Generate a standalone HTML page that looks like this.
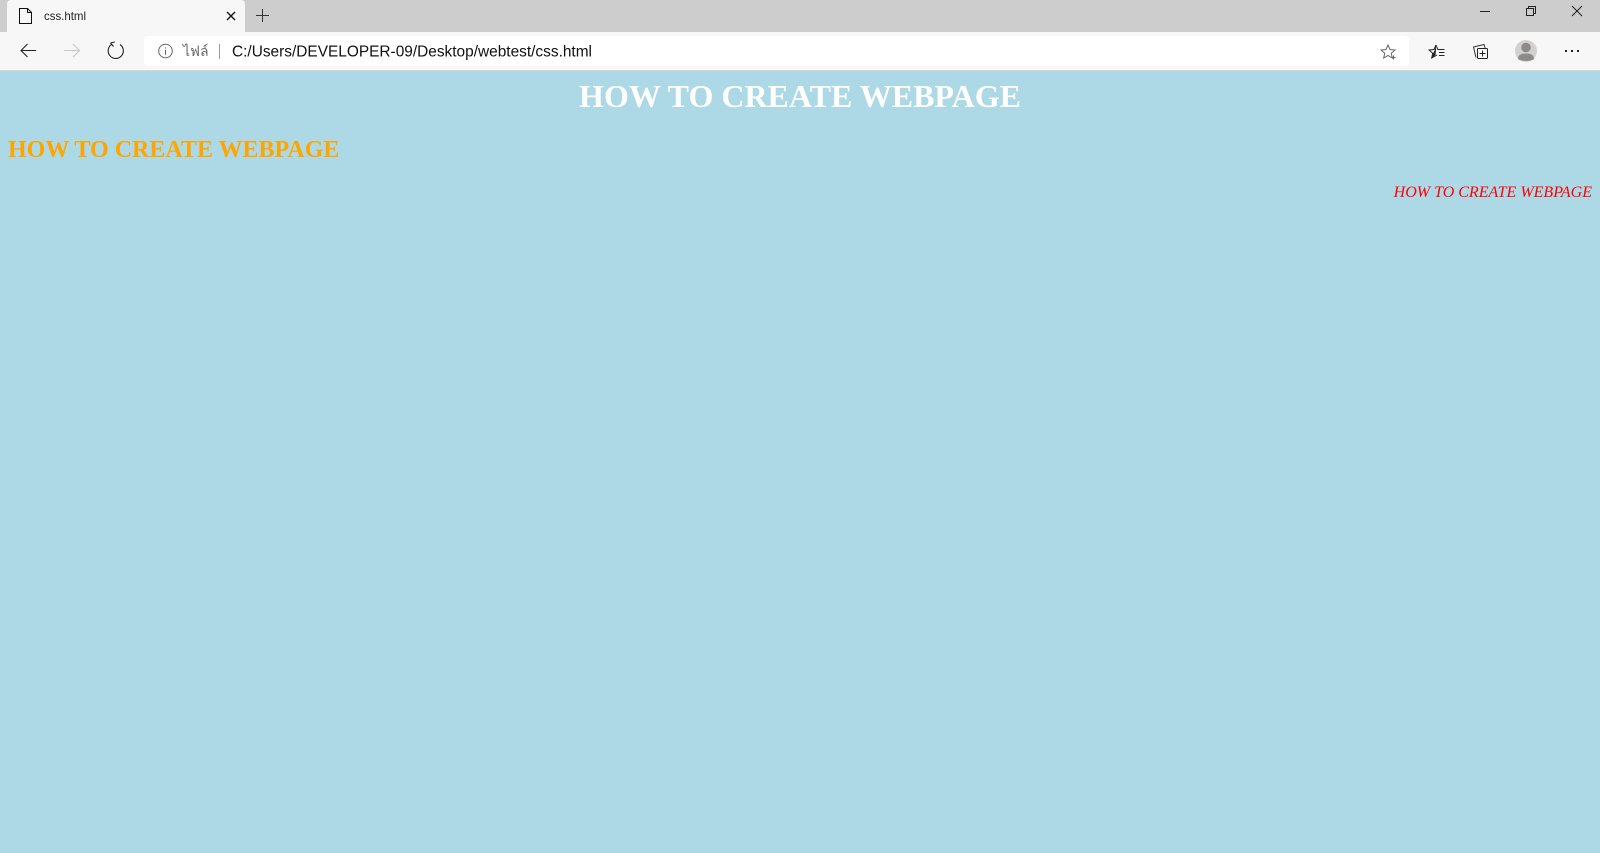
<!DOCTYPE html>
<html lang="en">
<head>
<meta charset="utf-8">
<title>css.html</title>
<style>
html,body{margin:0;padding:0;width:1600px;height:853px;overflow:hidden;background:#add8e6}
.abs{position:absolute;white-space:nowrap;margin:0}
#chrome{position:absolute;left:0;top:0;width:1600px;height:71px;display:block}
#chrome text{font-family:"Liberation Sans","Noto Sans CJK SC",sans-serif}
.h{font-family:"Liberation Serif","Times New Roman",serif}
</style>
</head>
<body>
<svg id="chrome" width="1600" height="71" viewBox="0 0 1600 71" xmlns="http://www.w3.org/2000/svg">
  <rect width="1600" height="32" fill="#cdcdcd"/>
  <rect y="32" width="1600" height="38" fill="#f7f7f7"/>
  <rect y="70" width="1600" height="1" fill="#d6d6d6"/>
  <path d="M7 32V4a4 4 0 0 1 4-4H241a4 4 0 0 1 4 4V32Z" fill="#f7f7f7"/>
  <path d="M19.500 23.500V8.500H27.500L31.500 12.500V23.500ZM27.500 8.500V12.500H31.500" fill="none" stroke="#111" stroke-width="1"/>
  <text x="44" y="20" font-size="12" fill="#222" textLength="42" lengthAdjust="spacingAndGlyphs">css.html</text>
  <path d="M227 12L235 20M235 12L227 20" stroke="#111" stroke-width="1.400" fill="none"/>
  <path d="M256 15.500H269M262.500 9V22" stroke="#333" stroke-width="1" fill="none"/>

  <path d="M36 50.500H21M27.500 44L21 50.500L27.500 57" stroke="#222" stroke-width="1.100" fill="none"/>
  <path d="M64 50.500H79.500M73 44L79.500 50.500L73 57" stroke="#c8c8c8" stroke-width="1.100" fill="none"/>
  <path d="M112 44.200A7.600 7.600 0 1 0 120 44.500M110.500 43L113.500 46.500M110.500 43L114.800 42" stroke="#222" stroke-width="1.100" fill="none"/>

  <rect x="144" y="36" width="1265" height="30" rx="4" fill="#fff"/>
  <circle cx="165.500" cy="51" r="6.800" fill="none" stroke="#666" stroke-width="1"/>
  <path d="M165.500 47.500V48.500M165.500 50V54.800" stroke="#666" stroke-width="1" fill="none"/>
  <text x="183" y="56" font-size="14" fill="#6a6a6a" font-family="Noto Sans CJK SC">ไฟล์</text>
  <rect x="219" y="44" width="1" height="15" fill="#9a9a9a"/>
  <text x="232" y="56.500" font-size="15.500" fill="#111" textLength="360" lengthAdjust="spacingAndGlyphs">C:/Users/DEVELOPER-09/Desktop/webtest/css.html</text>

  <path d="M1388 45L1390 49.500L1395 50L1391.300 53.300L1392.300 58L1388 55.500L1383.700 58L1384.700 53.300L1381 50L1386 49.500Z" fill="none" stroke="#666" stroke-width="1"/>
  <path d="M1391.500 57.500H1395.500M1393.500 55.500V59.500" stroke="#666" stroke-width="1"/>

  <path d="M1436 45L1437.800 49.500H1441M1436 45L1434 49.500L1429 50L1432.700 53.300L1431.700 58L1437 55" fill="none" stroke="#222" stroke-width="1"/>
  <path d="M1436 45.500L1434.800 50L1433 53.500L1432.200 57.500L1435.500 55L1436 50Z" fill="#222"/>
  <path d="M1439 49.500H1444.500M1439 52.500H1444.500M1439 55.500H1444.500" stroke="#222" stroke-width="1"/>

  <path d="M1476 57.500L1473.500 47L1484 44.500L1485.200 48" fill="none" stroke="#333" stroke-width="1"/>
  <rect x="1477.500" y="48.500" width="10" height="10" rx="1" fill="#f7f7f7" stroke="#222" stroke-width="1"/>
  <path d="M1482.500 50.500V56.500M1479.500 53.500H1485.500" stroke="#222" stroke-width="1"/>

  <circle cx="1526" cy="51" r="11" fill="#d3d1cf"/>
  <circle cx="1526" cy="47.500" r="4.800" fill="#8e8a87"/>
  <path d="M1518 59C1518 54.500 1522 53.500 1526 53.500C1530 53.500 1534 54.500 1534 59C1531.500 61.500 1520.500 61.500 1518 59Z" fill="#8e8a87"/>

  <rect x="1565" y="50" width="2" height="2" fill="#222"/>
  <rect x="1571" y="50" width="2" height="2" fill="#222"/>
  <rect x="1577" y="50" width="2" height="2" fill="#222"/>

  <path d="M1480 11.500H1490" stroke="#222" stroke-width="1"/>
  <rect x="1526.500" y="8.500" width="7" height="7" fill="none" stroke="#222" stroke-width="1"/>
  <path d="M1528.500 8.500V6.500H1535.500V13.500H1533.500" fill="none" stroke="#222" stroke-width="1"/>
  <path d="M1572 6L1582 16M1582 6L1572 16" stroke="#222" stroke-width="1" fill="none"/>
</svg>

<h1 class="abs h" style="left:0;width:1600px;top:78px;line-height:37px;font-size:32px;font-weight:bold;text-align:center;color:#fff">HOW TO CREATE WEBPAGE</h1>
<h2 class="abs h" style="left:8px;top:137px;line-height:27px;font-size:24px;font-weight:bold;color:orange">HOW TO CREATE WEBPAGE</h2>
<p class="abs h" style="right:8px;top:184px;line-height:18px;font-size:16px;font-style:italic;color:red">HOW TO CREATE WEBPAGE</p>
</body>
</html>
